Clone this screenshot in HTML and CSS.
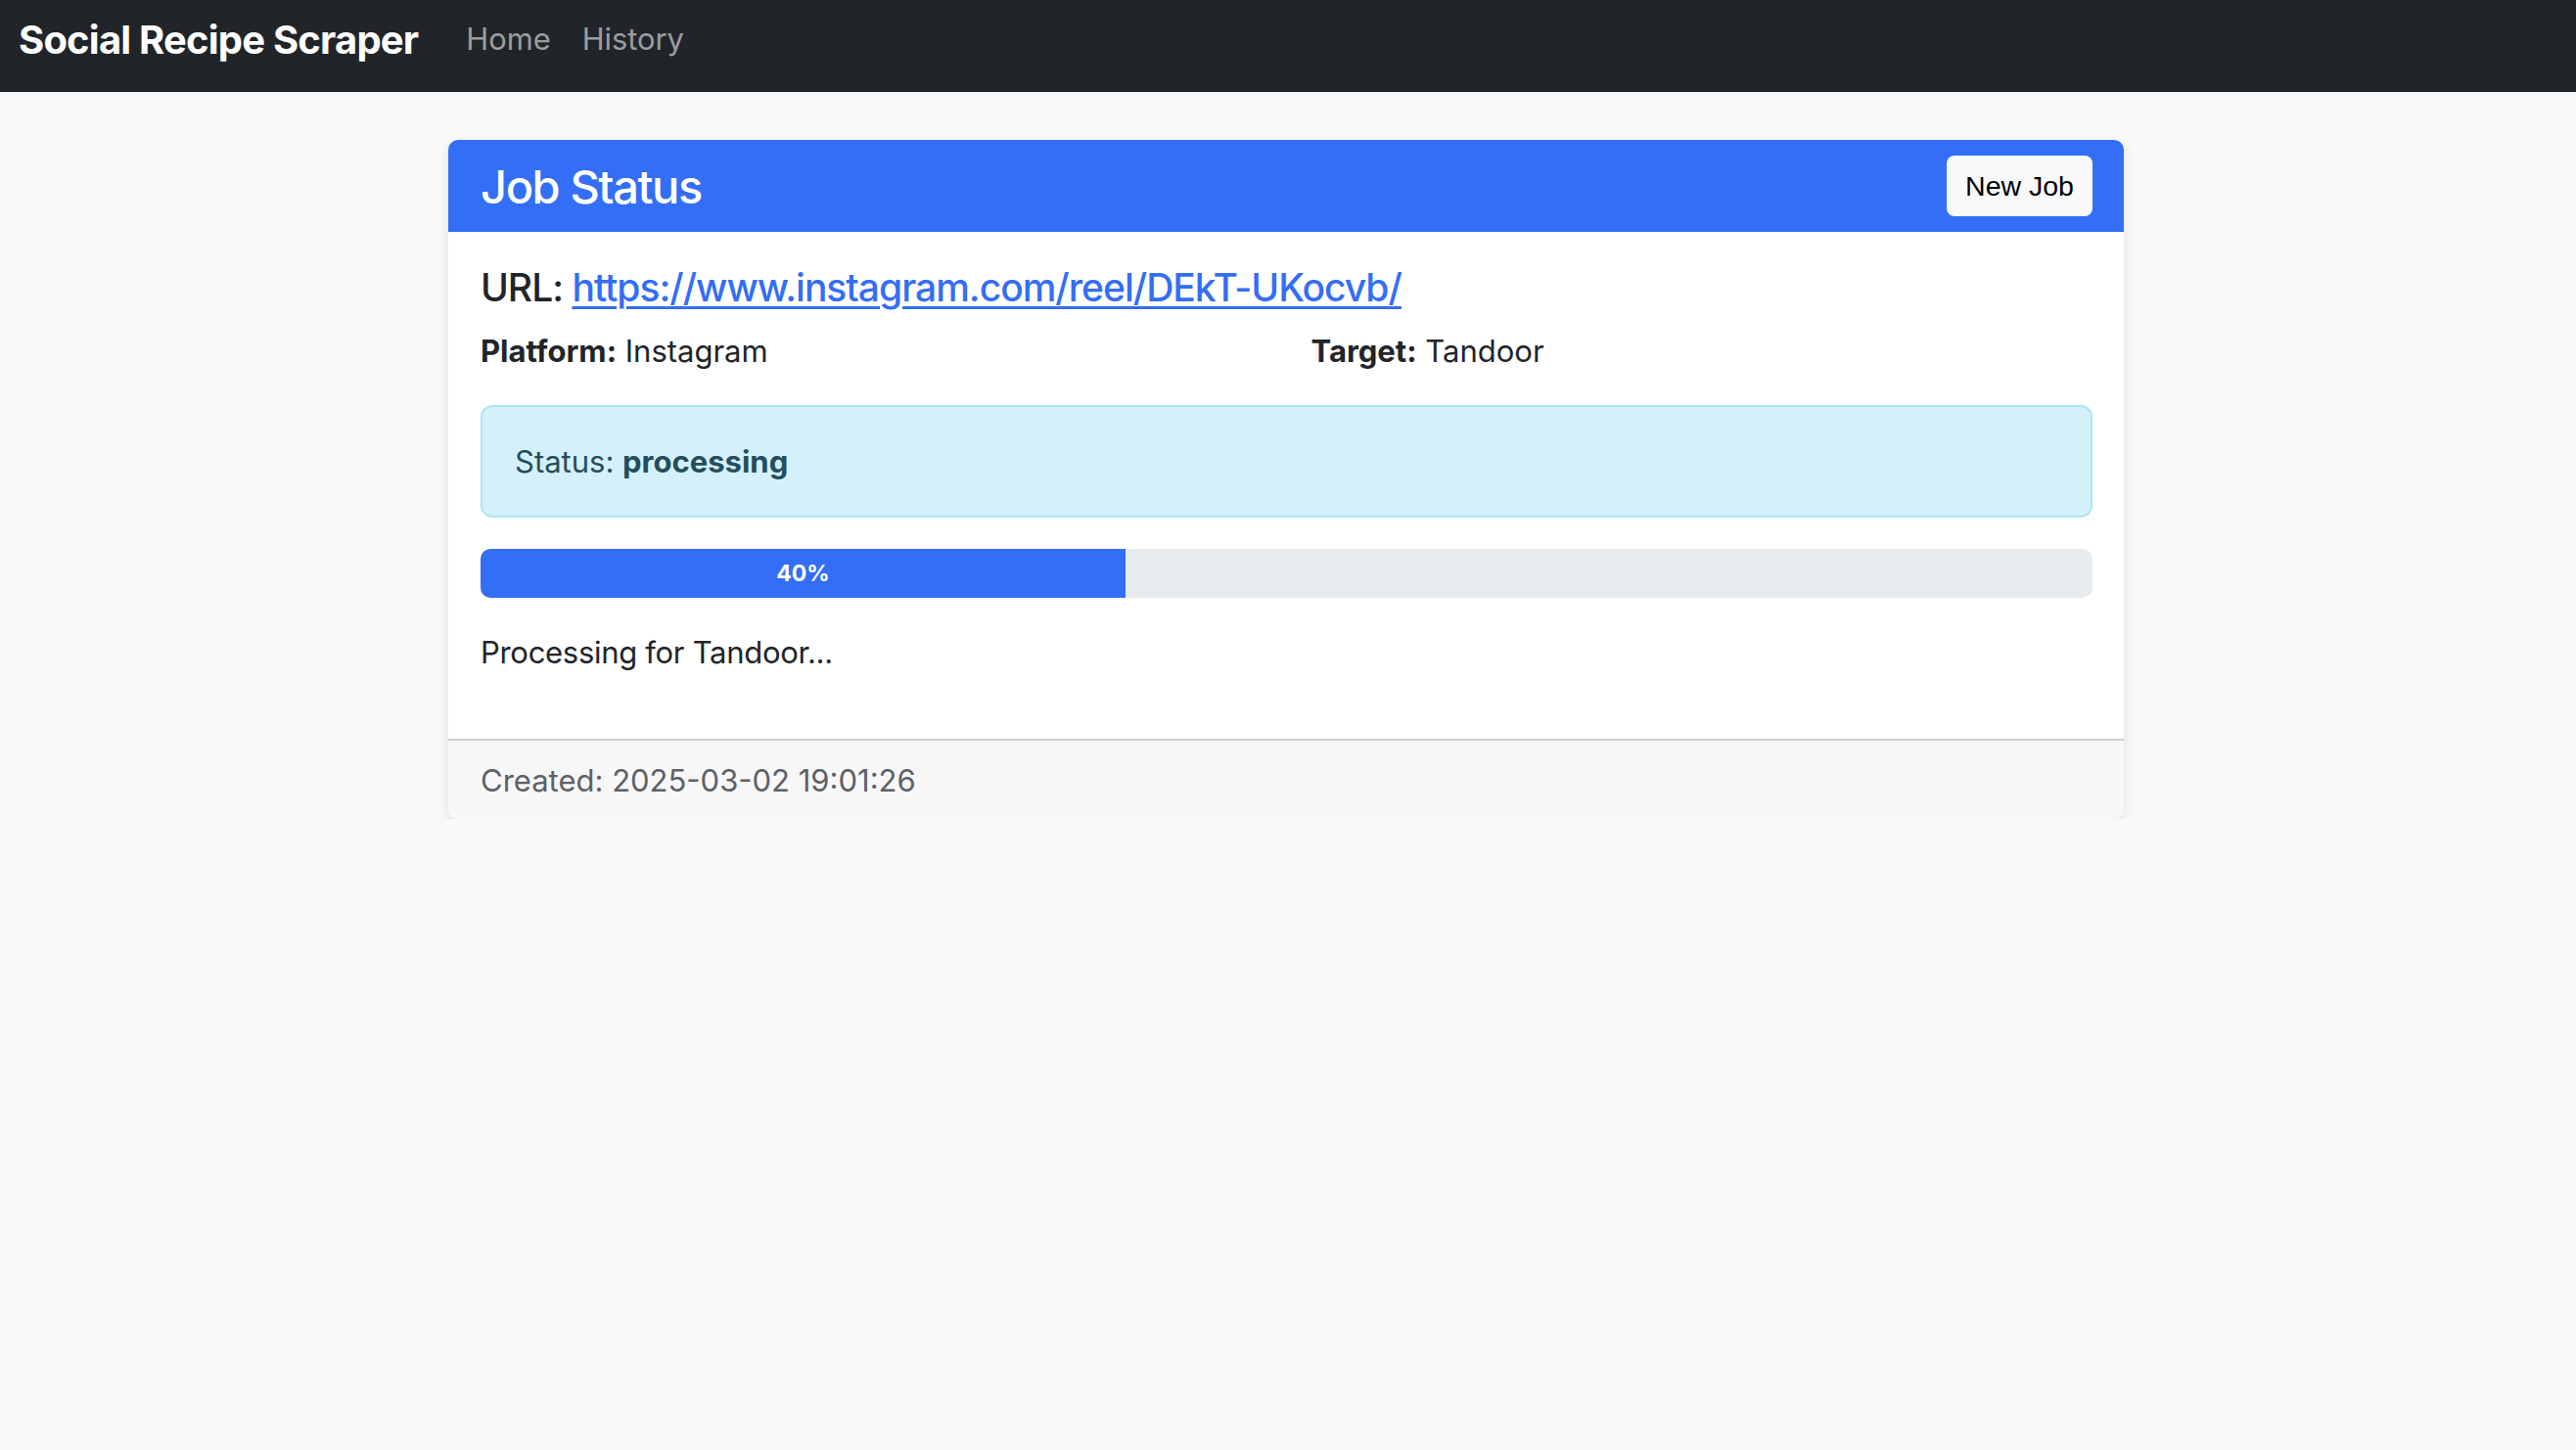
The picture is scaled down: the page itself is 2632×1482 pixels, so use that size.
FILE: index.html
```html
<!DOCTYPE html>
<html lang="en">
<head>
<meta charset="utf-8">
<title>Job Status - Social Recipe Scraper</title>
<link rel="stylesheet" href="styles.css">
</head>
<body>
<nav class="navbar">
  <a class="brand" href="#">Social Recipe Scraper</a>
  <ul class="nav-links">
    <li><a href="#">Home</a></li>
    <li><a href="#">History</a></li>
  </ul>
</nav>
<main class="container">
  <section class="card">
    <header class="card-header">
      <h3 class="card-title">Job Status</h3>
      <a class="btn-light" href="#">New Job</a>
    </header>
    <div class="card-body">
      <h5 class="url-line">URL: <a href="#">https://www.instagram.com/reel/DEkT-UKocvb/</a></h5>
      <div class="meta-row">
        <p><strong>Platform:</strong> Instagram</p>
        <p><strong>Target:</strong> Tandoor</p>
      </div>
      <div class="alert-info">Status: <strong>processing</strong></div>
      <div class="progress">
        <div class="progress-bar" style="width: 40%">40%</div>
      </div>
      <p class="message">Processing for Tandoor...</p>
    </div>
    <footer class="card-footer">Created: 2025-03-02 19:01:26</footer>
  </section>
</main>
</body>
</html>
```
FILE: styles.css
```css
* { box-sizing: border-box; }
html, body { margin: 0; padding: 0; }
body {
  background: #f8f9fa;
  font-family: Inter, "Noto Sans", "Liberation Sans", sans-serif;
  color: #212529;
  font-size: 31px;
  line-height: 1.5;
}
a { text-decoration: none; }

.navbar {
  height: 94px;
  background: #212529;
  display: flex;
  align-items: flex-start;
  padding: 0 19px;
}
.brand {
  color: #fff;
  font-weight: 700;
  font-size: 40px;
  line-height: 44px;
  margin-top: 19px;
  letter-spacing: -0.8px;
  margin-right: 33px;
}
.nav-links {
  list-style: none;
  margin: 17px 0 0 0;
  padding: 0;
  display: flex;
}
.nav-links a {
  display: block;
  color: #9b9d9f;
  font-size: 30.8px;
  line-height: 46px;
  padding: 0 16px;
}

.container {
  width: 1712px;
  margin: 49px 0 0 458px;
}
.card {
  background: #fff;
  border-radius: 10px;
  overflow: hidden;
  box-shadow: 0 4px 12px rgba(0, 0, 0, 0.1);
}
.card-header {
  height: 94px;
  background: #336ef5;
  display: flex;
  align-items: center;
  justify-content: space-between;
  padding: 0 32px 0 33px;
}
.card-title {
  margin: 2px 0 0;
  color: #fff;
  font-size: 47px;
  font-weight: 500;
  line-height: 1.2;
  letter-spacing: -1.4px;
}
.btn-light {
  display: flex;
  align-items: center;
  justify-content: center;
  width: 149px;
  height: 62px;
  border-radius: 8px;
  background: #f8f9fa;
  color: #000;
  font-family: "Liberation Sans", Arial, sans-serif;
  font-size: 28.5px;
}

.card-body {
  padding: 34px 32px 33px 33px;
}
.url-line {
  margin: 0 0 18px;
  font-size: 39px;
  font-weight: 500;
  line-height: 1.2;
  letter-spacing: -1px;
}
.url-line a {
  color: #346ef2;
  text-decoration: underline;
  text-decoration-thickness: 3px;
  text-underline-offset: 5px;
}
.meta-row {
  display: grid;
  grid-template-columns: 1fr 1fr;
  column-gap: 50px;
  margin-bottom: 32px;
}
.meta-row p { margin: 0; }
.meta-row strong { font-weight: 700; }

.alert-info {
  background: #d4f1fa;
  border: 2px solid #abe6f6;
  border-radius: 12px;
  color: #234e5c;
  padding: 33px 33px 31px;
}
.alert-info strong { font-weight: 700; }

.progress {
  margin-top: 32px;
  height: 50px;
  background: #e8ebee;
  border-radius: 10px;
  overflow: hidden;
  display: flex;
}
.progress-bar {
  background: #336ef5;
  color: #fff;
  font-size: 23px;
  font-weight: 700;
  display: flex;
  align-items: center;
  justify-content: center;
}
.message {
  margin: 33px 0 32px;
  letter-spacing: -0.3px;
}

.card-footer {
  background: #f7f7f7;
  border-top: 2px solid #cfcfcf;
  padding: 18px 33px 15px;
  color: #5c6166;
}
```
